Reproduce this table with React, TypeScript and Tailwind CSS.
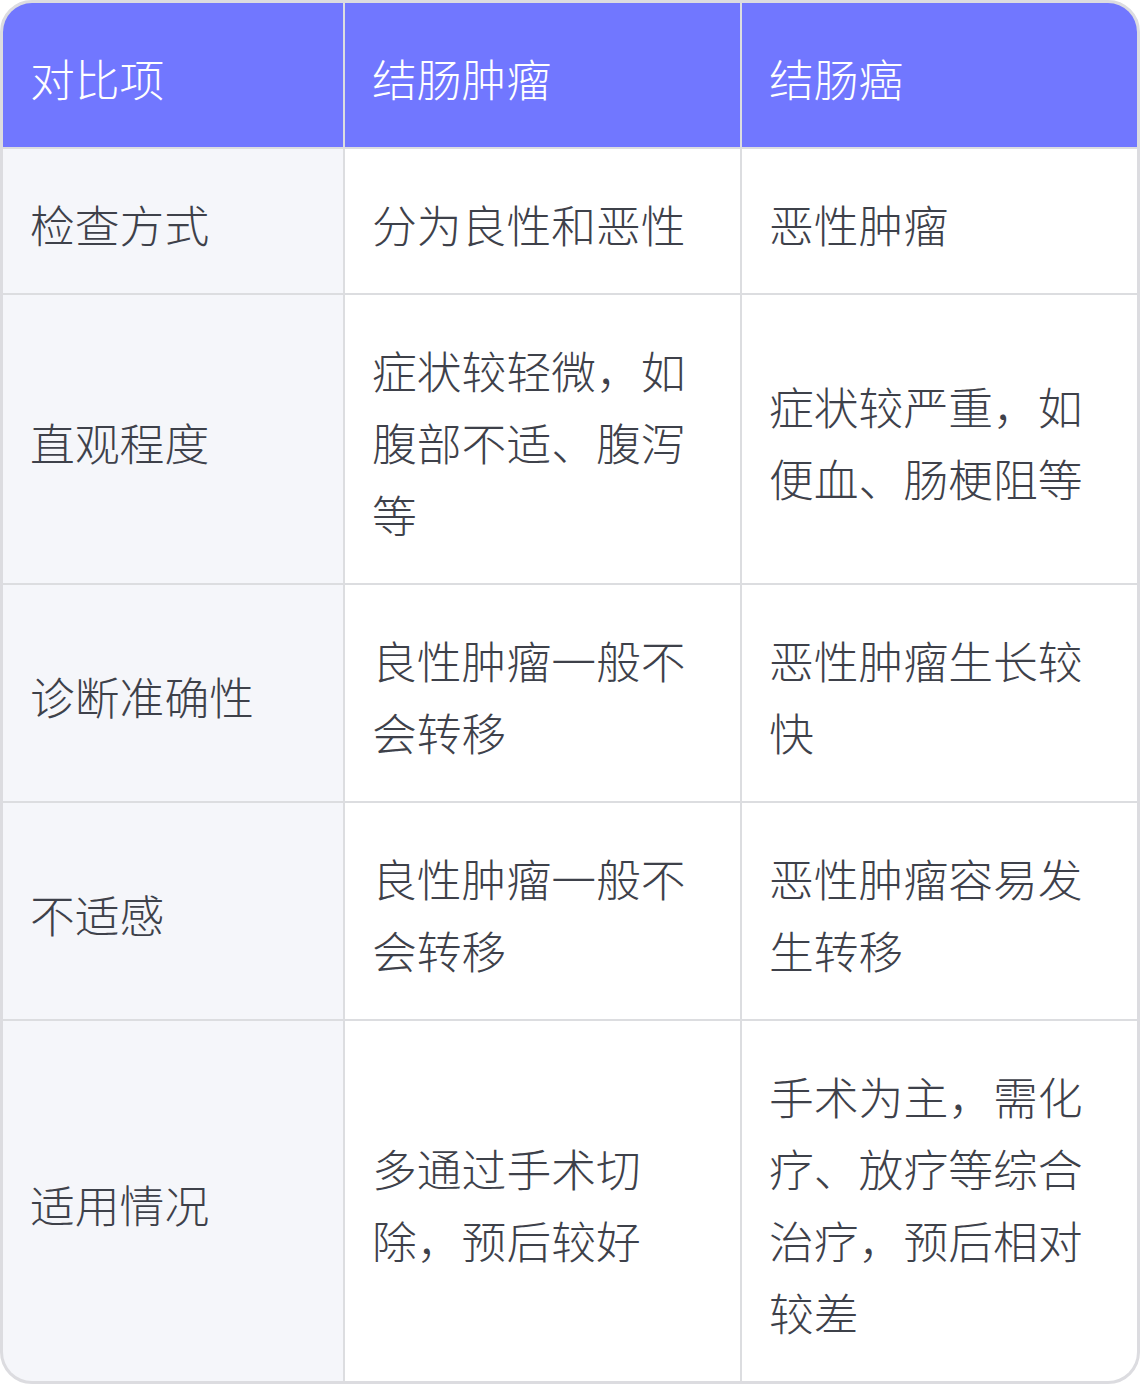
import React from "react";

const rows: { cells: [string, string, string] }[] = [
  { cells: ["检查方式", "分为良性和恶性", "恶性肿瘤"] },
  { cells: ["直观程度", "症状较轻微，如腹部不适、腹泻等", "症状较严重，如便血、肠梗阻等"] },
  { cells: ["诊断准确性", "良性肿瘤一般不会转移", "恶性肿瘤生长较快"] },
  { cells: ["不适感", "良性肿瘤一般不会转移", "恶性肿瘤容易发生转移"] },
  { cells: ["适用情况", "多通过手术切除，预后较好", "手术为主，需化疗、放疗等综合治疗，预后相对较差"] },
];

export default function App() {
  return (
    <div className="w-[1140px] h-[1384px] bg-white">
      <div
        className="w-[1140px] h-[1384px] border-[3px] border-[#dcdce0] rounded-[32px] overflow-hidden bg-[#dcdde0] grid grid-cols-[340px_395px_395px] grid-rows-[144px_144px_288px_216px_216px_360px] gap-[2px] text-[44.8px] leading-[72px] font-light"
        style={{ fontFamily: '"Noto Sans CJK SC", "Noto Sans", sans-serif' }}
      >
        {["对比项", "结肠肿瘤", "结肠癌"].map((t) => (
          <div key={t} className="bg-[#7177ff] text-white flex items-center pl-[27px] pr-[27px] pt-[6px]">
            {t}
          </div>
        ))}
        {rows.map((r) =>
          r.cells.map((c, i) => (
            <div
              key={r.cells[0] + i}
              className={`${i === 0 ? "bg-[#f5f6fa]" : "bg-white"} text-[#3e414a] flex items-center pl-[27px] pr-[27px] pt-[6px]`}
            >
              <span>{c}</span>
            </div>
          ))
        )}
      </div>
    </div>
  );
}
